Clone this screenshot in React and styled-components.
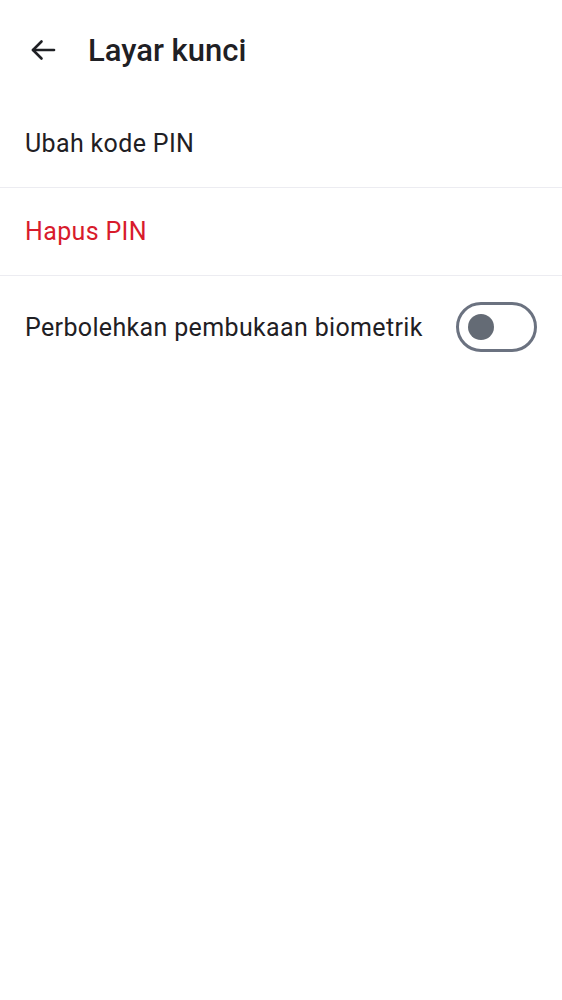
import React, { useState } from "react";
import styled, { createGlobalStyle } from "styled-components";

const Global = createGlobalStyle`
  html, body { margin: 0; padding: 0; background: #ffffff; }
  body { font-family: Roboto, "Noto Sans", sans-serif; -webkit-font-smoothing: antialiased; }
  * { box-sizing: border-box; }
`;

const Page = styled.div`
  width: 562px;
  min-height: 1000px;
  background: #ffffff;
  display: flex;
  flex-direction: column;
`;

const Header = styled.header`
  height: 100px;
  display: flex;
  align-items: center;
  padding: 0 0 0 26px;
  gap: 28px;
`;

const BackButton = styled.button`
  width: 34px;
  height: 34px;
  border: none;
  background: none;
  padding: 0;
  display: flex;
  align-items: center;
  justify-content: center;
  color: #1f2024;
  cursor: pointer;
`;

const Title = styled.h1`
  margin: 0;
  font-size: 31px;
  font-weight: 500;
  color: #1f2024;
  letter-spacing: 0;
`;

const List = styled.div`
  display: flex;
  flex-direction: column;
`;

const Row = styled.div`
  height: ${(p) => p.$h || 88}px;
  display: flex;
  align-items: center;
  justify-content: space-between;
  padding: 0 25px;
  border-bottom: ${(p) => (p.$divider ? "1px solid #ececf1" : "none")};
`;

const Label = styled.span`
  font-size: 25px;
  font-weight: 400;
  color: ${(p) => (p.$danger ? "#d81b2c" : "#1f2024")};
  letter-spacing: 0.35px;
`;

const Track = styled.button`
  width: 81px;
  height: 50px;
  border-radius: 25px;
  border: 3px solid #6b7280;
  background: #ffffff;
  padding: 0 0 0 9px;
  display: flex;
  align-items: center;
  cursor: pointer;
`;

const Knob = styled.span`
  width: 26px;
  height: 26px;
  border-radius: 50%;
  background: #646b75;
`;

const ArrowIcon = () => (
  <svg width="26" height="22" viewBox="0 0 26 22" fill="none">
    <path d="M24 11H3" stroke="currentColor" strokeWidth="2.6" strokeLinecap="round" />
    <path d="M11.5 2.5L3 11l8.5 8.5" stroke="currentColor" strokeWidth="2.6" strokeLinecap="round" strokeLinejoin="round" />
  </svg>
);

export default function App() {
  const [on, setOn] = useState(false);
  return (
    <Page>
      <Global />
      <Header>
        <BackButton aria-label="Kembali">
          <ArrowIcon />
        </BackButton>
        <Title>Layar kunci</Title>
      </Header>
      <List>
        <Row $divider>
          <Label>Ubah kode PIN</Label>
        </Row>
        <Row $divider>
          <Label $danger>Hapus PIN</Label>
        </Row>
        <Row $h={102}>
          <Label>Perbolehkan pembukaan biometrik</Label>
          <Track onClick={() => setOn(!on)} aria-pressed={on}>
            <Knob />
          </Track>
        </Row>
      </List>
    </Page>
  );
}
